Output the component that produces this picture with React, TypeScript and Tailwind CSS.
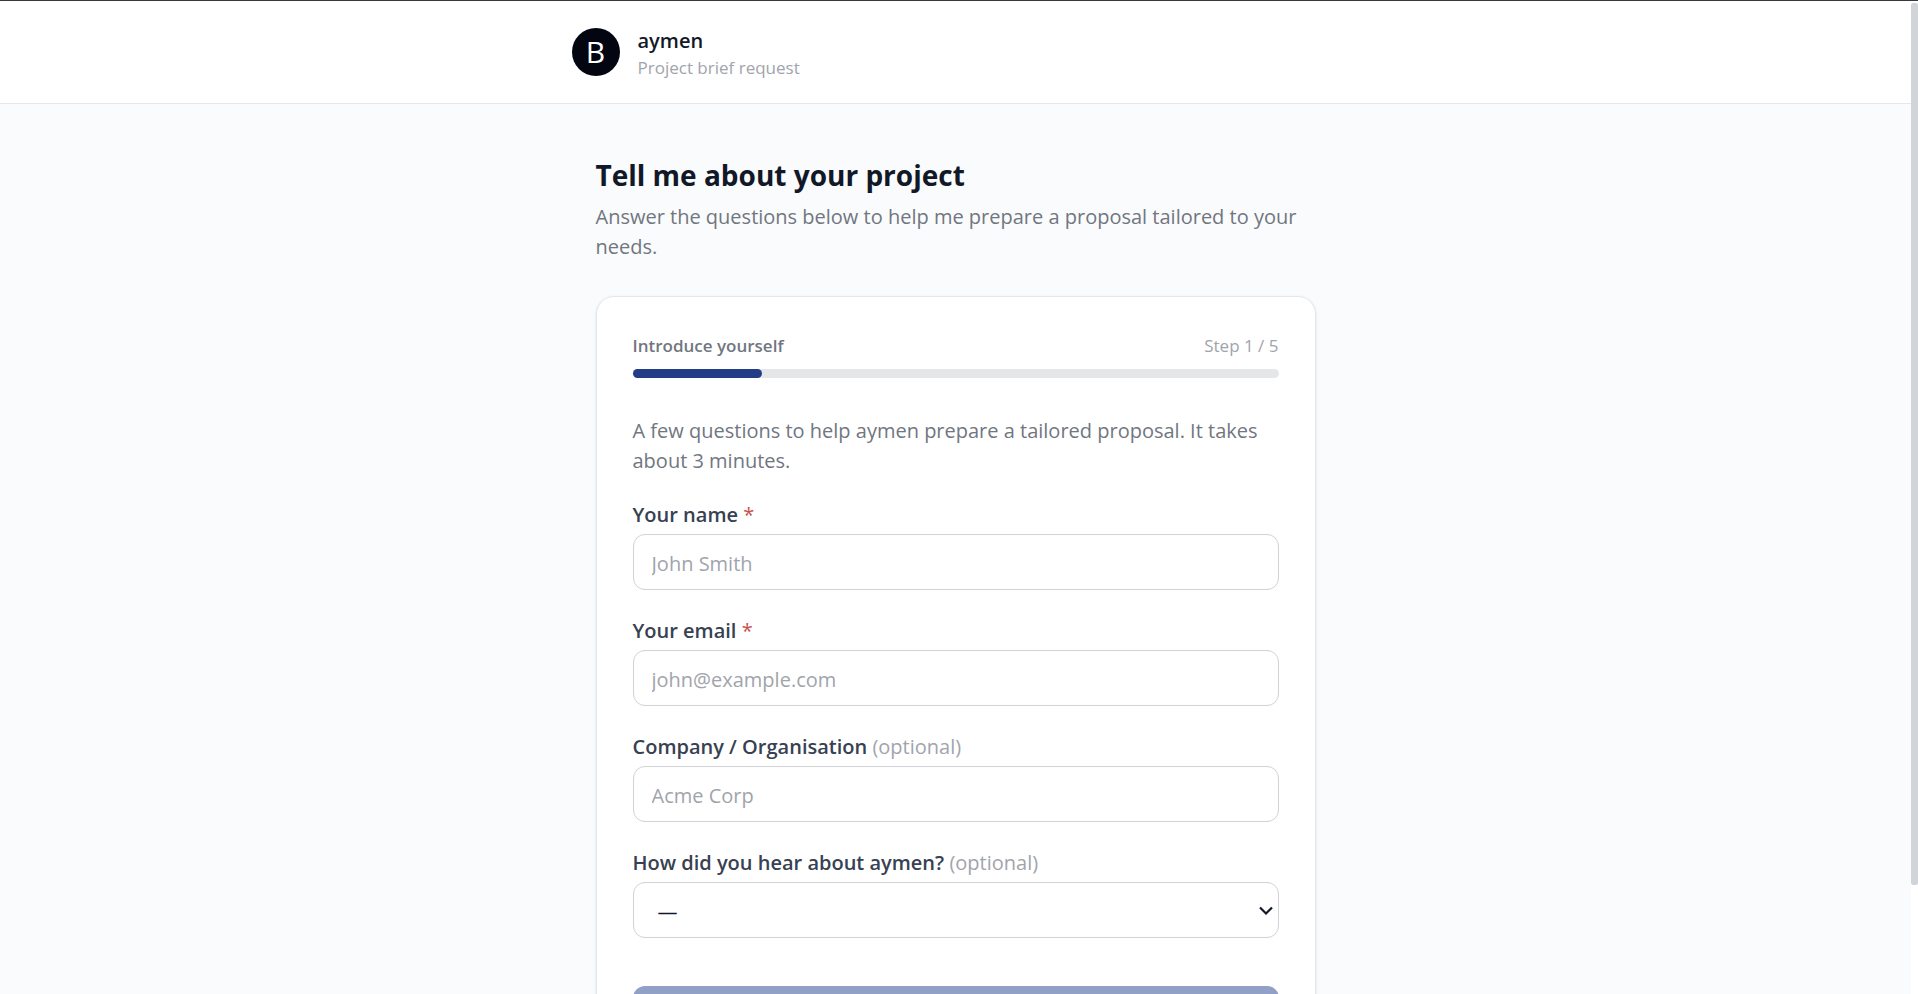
import type { ReactNode } from "react";

function Field({ id, label, required, children }: { id: string; label: string; required?: boolean; children: ReactNode }) {
  return (
    <div>
      <label htmlFor={id} className="block mb-1 font-semibold text-[#374151]">
        {label}{" "}
        {required ? (
          <span className="font-normal text-[#c9504c]">*</span>
        ) : (
          <span className="font-normal text-[#a1a4ac]">(optional)</span>
        )}
      </label>
      {children}
    </div>
  );
}

const inputClass =
  "block w-full h-14 rounded-xl border border-[#d1d3d6] bg-white px-[18px] pt-0.5 text-[#111827] placeholder:text-[#a1a4ac] outline-none";

export default function App() {
  return (
    <div className="h-screen flex overflow-hidden border-t border-[#3a383c] bg-[#fafbfc] font-['Open_Sans',sans-serif] text-[20px] leading-[30px]">
      <div className="flex-1 overflow-y-auto [scrollbar-width:none]">
        <header className="border-b border-[#e5e7eb] bg-white">
          <div className="mx-auto max-w-3xl py-[23px] flex items-center gap-[18px]">
            <div className="size-12 rounded-full bg-[#030510] flex items-center justify-center text-white text-[30px]">
              B
            </div>
            <div className="pt-0.5">
              <p className="font-semibold text-[#111827]">aymen</p>
              <p className="text-[17px] leading-6 text-[#a1a4ac]">Project brief request</p>
            </div>
          </div>
        </header>

        <main className="mx-auto max-w-[720px] pt-[50px] pb-12">
          <h1 className="text-[28px] leading-[42px] font-bold text-[#111827]">Tell me about your project</h1>
          <p className="mt-1.5 text-[#71767f]">
            Answer the questions below to help me prepare a proposal tailored to your needs.
          </p>

          <div className="mt-[34px] rounded-[18px] border border-[#e5e7eb] bg-white p-9 shadow-sm">
            <div className="flex justify-between text-[17px] leading-[26px]">
              <span className="font-semibold text-[#71767f]">Introduce yourself</span>
              <span className="text-[#a1a4ac]">Step 1 / 5</span>
            </div>
            <div className="mt-2.5 h-[9px] rounded-full bg-[#e5e6e8]">
              <div className="h-full w-1/5 rounded-full bg-[#243c86]" />
            </div>

            <p className="mt-[38px] text-[#71767f]">
              A few questions to help aymen prepare a tailored proposal. It takes about 3 minutes.
            </p>

            <form className="mt-6 space-y-[26px]">
              <Field id="name" label="Your name" required>
                <input id="name" type="text" placeholder="John Smith" className={inputClass} />
              </Field>

              <Field id="email" label="Your email" required>
                <input id="email" type="email" placeholder="john@example.com" className={inputClass} />
              </Field>

              <Field id="company" label="Company / Organisation">
                <input id="company" type="text" placeholder="Acme Corp" className={inputClass} />
              </Field>

              <Field id="source" label="How did you hear about aymen?">
                <div className="relative">
                  <select
                    id="source"
                    className="block w-full h-14 appearance-none rounded-xl border border-[#d1d3d6] bg-white px-6 pt-1 text-[#111827] outline-none"
                  >
                    <option value="">—</option>
                  </select>
                  <svg
                    viewBox="0 0 14 10"
                    className="pointer-events-none absolute right-1.5 top-6 h-2.5 w-3.5"
                    fill="none"
                    stroke="#111827"
                    strokeWidth="2.2"
                  >
                    <path d="M1 1.5 7 7.5 13 1.5" />
                  </svg>
                </div>
              </Field>

              <div className="pt-[22px]">
                <button type="button" disabled className="block h-[60px] w-full rounded-xl bg-[#929fc6] font-semibold text-white">
                  Continue
                </button>
              </div>
            </form>
          </div>
        </main>
      </div>

      {/* scrollbar */}
      <div className="w-[7px] bg-white pt-0.5">
        <div className="h-[89%] rounded-xs bg-[#d1d5da]" />
      </div>
    </div>
  );
}
